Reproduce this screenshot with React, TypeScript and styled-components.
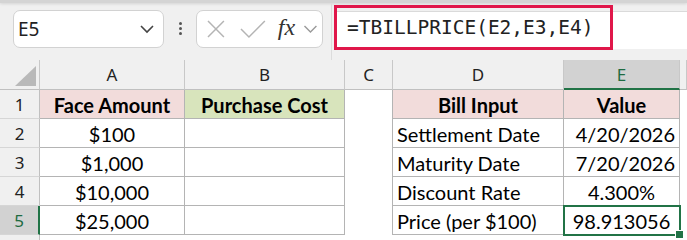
import styled, { createGlobalStyle } from 'styled-components';

const GlobalStyle = createGlobalStyle`
  body {
    margin: 0;
    background: #ffffff;
  }
`;

const green = '#217346';

const columns = ['A', 'B', 'C', 'D', 'E'];

type Row = {
  a: string;
  b: string;
  d: string;
  e: string;
  eAlign: 'left' | 'center' | 'right';
};

const rows: Row[] = [
  { a: 'Face Amount', b: 'Purchase Cost', d: 'Bill Input', e: 'Value', eAlign: 'center' },
  { a: '$100', b: '', d: 'Settlement Date', e: '4/20/2026', eAlign: 'right' },
  { a: '$1,000', b: '', d: 'Maturity Date', e: '7/20/2026', eAlign: 'right' },
  { a: '$10,000', b: '', d: 'Discount Rate', e: '4.300%', eAlign: 'center' },
  { a: '$25,000', b: '', d: 'Price (per $100)', e: '98.913056', eAlign: 'center' },
];

const App = (): JSX.Element => {
  return (
    <Page>
      <GlobalStyle />
      <TopEdge />
      <Toolbar>
        <NameBox>
          <span>E5</span>
          <svg width="16" height="10" viewBox="0 0 16 10">
            <path d="M2 2 L8 8 L14 2" fill="none" stroke="#444" strokeWidth="1.6" />
          </svg>
        </NameBox>
        <Dots>
          <i />
          <i />
          <i />
        </Dots>
        <FuncBox>
          <svg width="20" height="20" viewBox="0 0 20 20">
            <path d="M2 2 L18 18 M18 2 L2 18" stroke="#b4b4b4" strokeWidth="1.5" />
          </svg>
          <svg width="26" height="20" viewBox="0 0 26 20">
            <path d="M1 10 L9 18 L25 2" fill="none" stroke="#b4b4b4" strokeWidth="1.5" />
          </svg>
          <Fx>fx</Fx>
          <svg width="15" height="10" viewBox="0 0 15 10">
            <path d="M1.5 2 L7.5 8 L13.5 2" fill="none" stroke="#9a9a9a" strokeWidth="1.4" />
          </svg>
        </FuncBox>
        <Divider />
        <FormulaArea>
          <FormulaHighlight>=TBILLPRICE(E2,E3,E4)</FormulaHighlight>
        </FormulaArea>
      </Toolbar>
      <Sheet>
        <Corner>
          <svg width="21" height="20" viewBox="0 0 21 20">
            <path d="M21 0 L21 20 L0 20 Z" fill="#b9b9b9" />
          </svg>
        </Corner>
        {columns.map((c) => (
          <ColHead key={c} $selected={c === 'E'}>
            {c}
          </ColHead>
        ))}
        <ColHead $selected={false} />
        {rows.map((r, i) => {
          const header = i === 0;
          const last = i === rows.length - 1;
          return [
            <RowHead key={`h${i}`} $selected={last}>
              {i + 1}
            </RowHead>,
            <Cell key={`a${i}`} $fill={header ? '#f2dcdb' : undefined} $bold={header} $align="center">
              {r.a}
            </Cell>,
            <Cell key={`b${i}`} $fill={header ? '#d8e4bc' : undefined} $bold={header} $align="center">
              {r.b}
            </Cell>,
            <EmptyCell key={`c${i}`} $edge />,
            <Cell
              key={`d${i}`}
              $fill={header ? '#f2dcdb' : undefined}
              $bold={header}
              $align={header ? 'center' : 'left'}
            >
              {r.d}
            </Cell>,
            <Cell
              key={`e${i}`}
              $fill={header ? '#f2dcdb' : undefined}
              $bold={header}
              $align={r.eAlign}
              $active={last}
            >
              {r.e}
              {last && <FillHandle />}
            </Cell>,
            <EmptyCell key={`f${i}`} $edge={false} />,
          ];
        })}
        <RowHead $selected={false} />
      </Sheet>
    </Page>
  );
};

const Page = styled.div`
  width: 687px;
  height: 240px;
  overflow: hidden;
  background: #f0f0f0;
`;

const TopEdge = styled.div`
  height: 3px;
  background: #d4d4d4;
  box-shadow: 0 1px 3px rgba(0, 0, 0, 0.12);
`;

const Toolbar = styled.div`
  height: 57px;
  display: flex;
  align-items: center;
  padding-left: 13px;
  box-sizing: border-box;
  padding-bottom: 6px;
`;

const Box = styled.div`
  height: 38px;
  box-sizing: border-box;
  background: #ffffff;
  border: 1px solid #d2d2d2;
  border-radius: 7px;
  display: flex;
  align-items: center;
`;

const NameBox = styled(Box)`
  width: 151px;
  padding: 0 8px 0 4px;
  justify-content: space-between;
  font-family: 'Noto Sans', sans-serif;
  font-size: 19px;
  color: #222;
`;

const Dots = styled.div`
  width: 32px;
  display: flex;
  flex-direction: column;
  align-items: center;
  gap: 2px;

  i {
    display: block;
    width: 3px;
    height: 3px;
    border-radius: 50%;
    background: #555;
  }
`;

const FuncBox = styled(Box)`
  width: 127px;
  padding: 0 4px 0 9px;
  gap: 12px;
  svg:first-child {
    margin-right: 2px;
  }
`;

const Fx = styled.span`
  font-family: 'Liberation Serif', serif;
  font-style: italic;
  font-size: 24px;
  color: #333;
  line-height: 1;
  margin-bottom: 3px;
  margin-right: -4px;
`;

const Divider = styled.div`
  width: 1px;
  align-self: stretch;
  margin: 0 2px 0 8px;
  margin-bottom: -6px;
  background: #dcdcdc;
`;

const FormulaArea = styled.div`
  flex: 1;
  height: 37px;
  margin-top: 2px;
  background: #ffffff;
  border-top: 1px solid #dadada;
  position: relative;
`;

const FormulaHighlight = styled.div`
  position: absolute;
  left: 0;
  top: -7px;
  width: 279px;
  height: 45px;
  box-sizing: border-box;
  border: 3px solid #e0174a;
  display: flex;
  align-items: center;
  padding-left: 10px;
  font-family: 'DejaVu Sans Mono', monospace;
  font-size: 19.5px;
  color: #222;
  white-space: nowrap;
`;

const Sheet = styled.div`
  display: grid;
  grid-template-columns: 40px 145px 160px 48px 171px 116px 7px;
  grid-template-rows: 30px repeat(5, 29px) 6px;
  background: #ffffff;
`;

const Corner = styled.div`
  background: #f0f0f0;
  border-right: 1px solid #c8c8c8;
  border-bottom: 1px solid #c0c0c0;
  display: flex;
  align-items: flex-end;
  justify-content: flex-end;
  padding: 0 3px 3px 0;
`;

const ColHead = styled.div<{ $selected: boolean }>`
  box-sizing: border-box;
  background: ${(p) => (p.$selected ? '#d2d2d2' : '#f0f0f0')};
  color: ${(p) => (p.$selected ? '#1e6b41' : '#222')};
  border-right: 1px solid #c8c8c8;
  border-bottom: ${(p) => (p.$selected ? `2px solid ${green}` : '1px solid #c0c0c0')};
  display: flex;
  align-items: center;
  justify-content: center;
  font-family: 'Noto Sans', sans-serif;
  font-size: 17px;
`;

const RowHead = styled.div<{ $selected: boolean }>`
  box-sizing: border-box;
  background: ${(p) => (p.$selected ? '#d2d2d2' : '#f0f0f0')};
  color: ${(p) => (p.$selected ? '#1e6b41' : '#222')};
  border-right: ${(p) => (p.$selected ? `2px solid ${green}` : '1px solid #c0c0c0')};
  border-bottom: 1px solid #d6d6d6;
  display: flex;
  align-items: center;
  justify-content: center;
  font-family: 'Noto Sans', sans-serif;
  font-size: 17px;
`;

const Cell = styled.div<{
  $fill?: string;
  $bold?: boolean;
  $align: 'left' | 'center' | 'right';
  $active?: boolean;
}>`
  position: relative;
  box-sizing: border-box;
  background: ${(p) => p.$fill ?? '#ffffff'};
  border-right: 1px solid #b4b4b4;
  border-bottom: 1px solid #b4b4b4;
  ${(p) => (p.$active ? `outline: 2px solid ${green}; outline-offset: -1px; z-index: 1;` : '')}
  display: flex;
  align-items: center;
  justify-content: ${(p) =>
    p.$align === 'left' ? 'flex-start' : p.$align === 'right' ? 'flex-end' : 'center'};
  padding: 1px 4px 0;
  font-family: 'Lato', sans-serif;
  font-size: 20px;
  font-weight: ${(p) => (p.$bold ? 700 : 400)};
  color: #000;
  white-space: nowrap;
`;

const EmptyCell = styled.div<{ $edge: boolean }>`
  background: #ffffff;
  border-right: ${(p) => (p.$edge ? '1px solid #b4b4b4' : 'none')};
`;

const FillHandle = styled.span`
  position: absolute;
  right: -5px;
  bottom: -5px;
  width: 7px;
  height: 7px;
  background: ${green};
  border: 1px solid #ffffff;
`;

export default App;
